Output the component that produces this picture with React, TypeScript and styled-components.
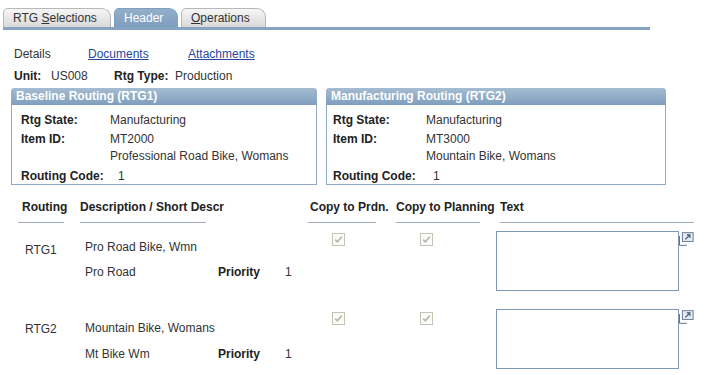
import React from "react";
import styled, { createGlobalStyle, css } from "styled-components";

const GlobalStyle = createGlobalStyle`
  body {
    margin: 0;
    background: #ffffff;
    font-family: "Liberation Sans", Arial, sans-serif;
    font-size: 12px;
    color: #333333;
  }
`;

const Page = styled.div`
  width: 706px;
  height: 375px;
  padding-top: 8px;
  box-sizing: border-box;
  overflow: hidden;
`;

const TabBar = styled.div`
  display: flex;
  gap: 3px;
  margin-left: 3px;
  width: 647px;
  border-bottom: 3px solid #87a3c1;
`;

const Tab = styled.div<{ $active?: boolean; $w: number }>`
  width: ${(p) => p.$w}px;
  height: 19px;
  box-sizing: border-box;
  padding-left: 9px;
  line-height: 18px;
  border-radius: 5px 9px 0 0;
  border: 1px solid ${(p) => (p.$active ? "#7f9fbf" : "#b8b8b8")};
  border-bottom: none;
  background: ${(p) =>
    p.$active
      ? "linear-gradient(#93afca, #7e9ebe)"
      : "linear-gradient(#f6f6f6, #d9d9d9)"};
  color: ${(p) => (p.$active ? "#ffffff" : "#333333")};
  font-size: 12px;
  white-space: nowrap;

  u {
    text-decoration: underline;
  }
`;

const NavRow = styled.div`
  display: flex;
  margin: 17px 0 0 14px;
  line-height: 14px;
`;

const NavItem = styled.span<{ $w: number; $link?: boolean }>`
  width: ${(p) => p.$w}px;
  color: ${(p) => (p.$link ? "#27489a" : "#333333")};
  text-decoration: ${(p) => (p.$link ? "underline" : "none")};
`;

const UnitRow = styled.div`
  display: flex;
  margin: 8px 0 0 14px;
  line-height: 14px;
`;

const Label = styled.span<{ $w?: number }>`
  font-weight: bold;
  color: #222222;
  ${(p) => p.$w && `width: ${p.$w}px;`}
`;

const Value = styled.span<{ $w?: number; $pl?: number }>`
  color: #333333;
  ${(p) => p.$w && `width: ${p.$w}px;`}
  padding-left: ${(p) => p.$pl ?? 0}px;
`;

const BoxRow = styled.div`
  display: flex;
  gap: 9px;
  margin: 5px 0 0 11px;
`;

const Box = styled.div<{ $w: number }>`
  width: ${(p) => p.$w}px;
  box-sizing: border-box;
  border: 1px solid #90aac6;
  border-top: none;
  border-radius: 4px 4px 0 0;
`;

const BoxHeader = styled.div`
  height: 17px;
  margin: 0 -1px;
  padding-left: 5px;
  border-radius: 4px 4px 0 0;
  background: linear-gradient(#a5bcd2, #7f9ebe);
  color: #ffffff;
  font-weight: bold;
  line-height: 17px;
`;

const BoxBody = styled.div<{ $pl: number; $col: number }>`
  display: grid;
  grid-template-columns: ${(p) => p.$col}px 1fr;
  row-gap: 3px;
  padding: 7px 0 0 ${(p) => p.$pl}px;
  line-height: 16px;
`;

const TallLabel = styled(Label)`
  line-height: 17px;
`;

const MultiLine = styled.div`
  line-height: 17px;
  color: #333333;
`;

const cols = css`
  display: grid;
  grid-template-columns: 62px 228px 88px 100px 198px;
`;

const Table = styled.div`
  margin: 14px 0 0 18px;
`;

const HeadRow = styled.div`
  ${cols}
`;

const HeadCell = styled.div<{ $w: number; $ml?: number; $pl?: number }>`
  width: ${(p) => p.$w}px;
  margin-left: ${(p) => p.$ml ?? 0}px;
  padding-left: ${(p) => p.$pl ?? 0}px;
  box-sizing: border-box;
  padding-bottom: 7px;
  line-height: 16px;
  font-weight: bold;
  color: #222222;
  white-space: nowrap;
  border-bottom: 1px solid #a0aabb;
`;

const DataRow = styled.div<{ $mt: number }>`
  ${cols}
  height: 78px;
  margin-top: ${(p) => p.$mt}px;
`;

const RoutingCell = styled.div<{ $pt: number }>`
  padding: ${(p) => p.$pt}px 0 0 7px;
  line-height: 16px;
`;

const DescCell = styled.div<{ $pt: number; $gap: number }>`
  display: flex;
  flex-direction: column;
  gap: ${(p) => p.$gap}px;
  padding: ${(p) => p.$pt}px 0 0 5px;
  line-height: 16px;
`;

const PriorityLine = styled.div`
  display: flex;
`;

const CheckCell = styled.div<{ $pt: number }>`
  padding: ${(p) => p.$pt}px 0 0 24px;
`;

const TextCell = styled.div`
  display: flex;
  align-items: flex-start;
`;

const TextBox = styled.textarea`
  width: 188px;
  height: 60px;
  box-sizing: border-box;
  border: 1px solid #7d97b5;
  resize: none;
  margin: 0;
  padding: 2px;
  font-family: "Liberation Sans", Arial, sans-serif;
  font-size: 12px;
  outline: none;
`;

const ExpandIcon = styled.svg`
  display: block;
  margin-top: 1px;
`;

const DisabledCheck = () => (
  <svg width="13" height="13" viewBox="0 0 13 13">
    <rect x="0.5" y="0.5" width="12" height="12" fill="#fbfbf8" stroke="#c6c3b6" />
    <path d="M3.2 6.6 L5.4 8.8 L9.8 3.8" stroke="#b5b5aa" strokeWidth="1.6" fill="none" />
  </svg>
);

const Expand = () => (
  <ExpandIcon width="15" height="14" viewBox="0 0 15 14">
    <path d="M0.5 4 V13.5 H8" stroke="#5b6d83" fill="none" />
    <rect x="3.5" y="0.5" width="11" height="9" fill="#e3eaf1" stroke="#6a7d93" />
    <path d="M6.5 7.5 L11 3" stroke="#3e4f63" strokeWidth="1.1" fill="none" />
    <path d="M8 2.8 H11.2 V6" stroke="#3e4f63" strokeWidth="1.1" fill="none" />
  </ExpandIcon>
);

const routes = [
  { id: "RTG1", descr: "Pro Road Bike, Wmn", short: "Pro Road", priority: 1, mt: 8, rpt: 11, dpt: 8, gap: 9, cpt: 2 },
  { id: "RTG2", descr: "Mountain Bike, Womans", short: "Mt Bike Wm", priority: 1, mt: 0, rpt: 12, dpt: 11, gap: 10, cpt: 3 },
];

const App: React.FC = () => {
  return (
    <>
      <GlobalStyle />
      <Page>
        <TabBar>
          <Tab $w={108}>
            RTG <u>S</u>elections
          </Tab>
          <Tab $w={64} $active>
            Header
          </Tab>
          <Tab $w={85}>
            <u>O</u>perations
          </Tab>
        </TabBar>

        <NavRow>
          <NavItem $w={74}>Details</NavItem>
          <NavItem $w={100} $link>
            Documents
          </NavItem>
          <NavItem $w={90} $link>
            Attachments
          </NavItem>
        </NavRow>

        <UnitRow>
          <Label $w={37}>Unit:</Label>
          <Value $w={63}>US008</Value>
          <Label $w={61}>Rtg Type:</Label>
          <Value>Production</Value>
        </UnitRow>

        <BoxRow>
          <Box $w={306}>
            <BoxHeader>Baseline Routing (RTG1)</BoxHeader>
            <BoxBody $pl={9} $col={89}>
              <Label>Rtg State:</Label>
              <Value>Manufacturing</Value>
              <TallLabel>Item ID:</TallLabel>
              <MultiLine>
                MT2000
                <br />
                Professional Road Bike, Womans
              </MultiLine>
              <Label>Routing Code:</Label>
              <Value $pl={8}>1</Value>
            </BoxBody>
          </Box>
          <Box $w={340}>
            <BoxHeader>Manufacturing Routing (RTG2)</BoxHeader>
            <BoxBody $pl={6} $col={93}>
              <Label>Rtg State:</Label>
              <Value>Manufacturing</Value>
              <TallLabel>Item ID:</TallLabel>
              <MultiLine>
                MT3000
                <br />
                Mountain Bike, Womans
              </MultiLine>
              <Label>Routing Code:</Label>
              <Value $pl={7}>1</Value>
            </BoxBody>
          </Box>
        </BoxRow>

        <Table>
          <HeadRow>
            <HeadCell $w={46} $pl={4}>
              Routing
            </HeadCell>
            <HeadCell $w={126}>Description / Short Descr</HeadCell>
            <HeadCell $w={68} $pl={2}>
              Copy to Prdn.
            </HeadCell>
            <HeadCell $w={84}>Copy to Planning</HeadCell>
            <HeadCell $w={194} $ml={4}>
              Text
            </HeadCell>
          </HeadRow>

          {routes.map((r) => (
            <DataRow key={r.id} $mt={r.mt}>
              <RoutingCell $pt={r.rpt}>{r.id}</RoutingCell>
              <DescCell $pt={r.dpt} $gap={r.gap}>
                <span>{r.descr}</span>
                <PriorityLine>
                  <Value $w={133}>{r.short}</Value>
                  <Label $w={67}>Priority</Label>
                  <Value>{r.priority}</Value>
                </PriorityLine>
              </DescCell>
              <CheckCell $pt={r.cpt}>
                <DisabledCheck />
              </CheckCell>
              <CheckCell $pt={r.cpt}>
                <DisabledCheck />
              </CheckCell>
              <TextCell>
                <TextBox readOnly />
                <Expand />
              </TextCell>
            </DataRow>
          ))}
        </Table>
      </Page>
    </>
  );
};

export default App;
